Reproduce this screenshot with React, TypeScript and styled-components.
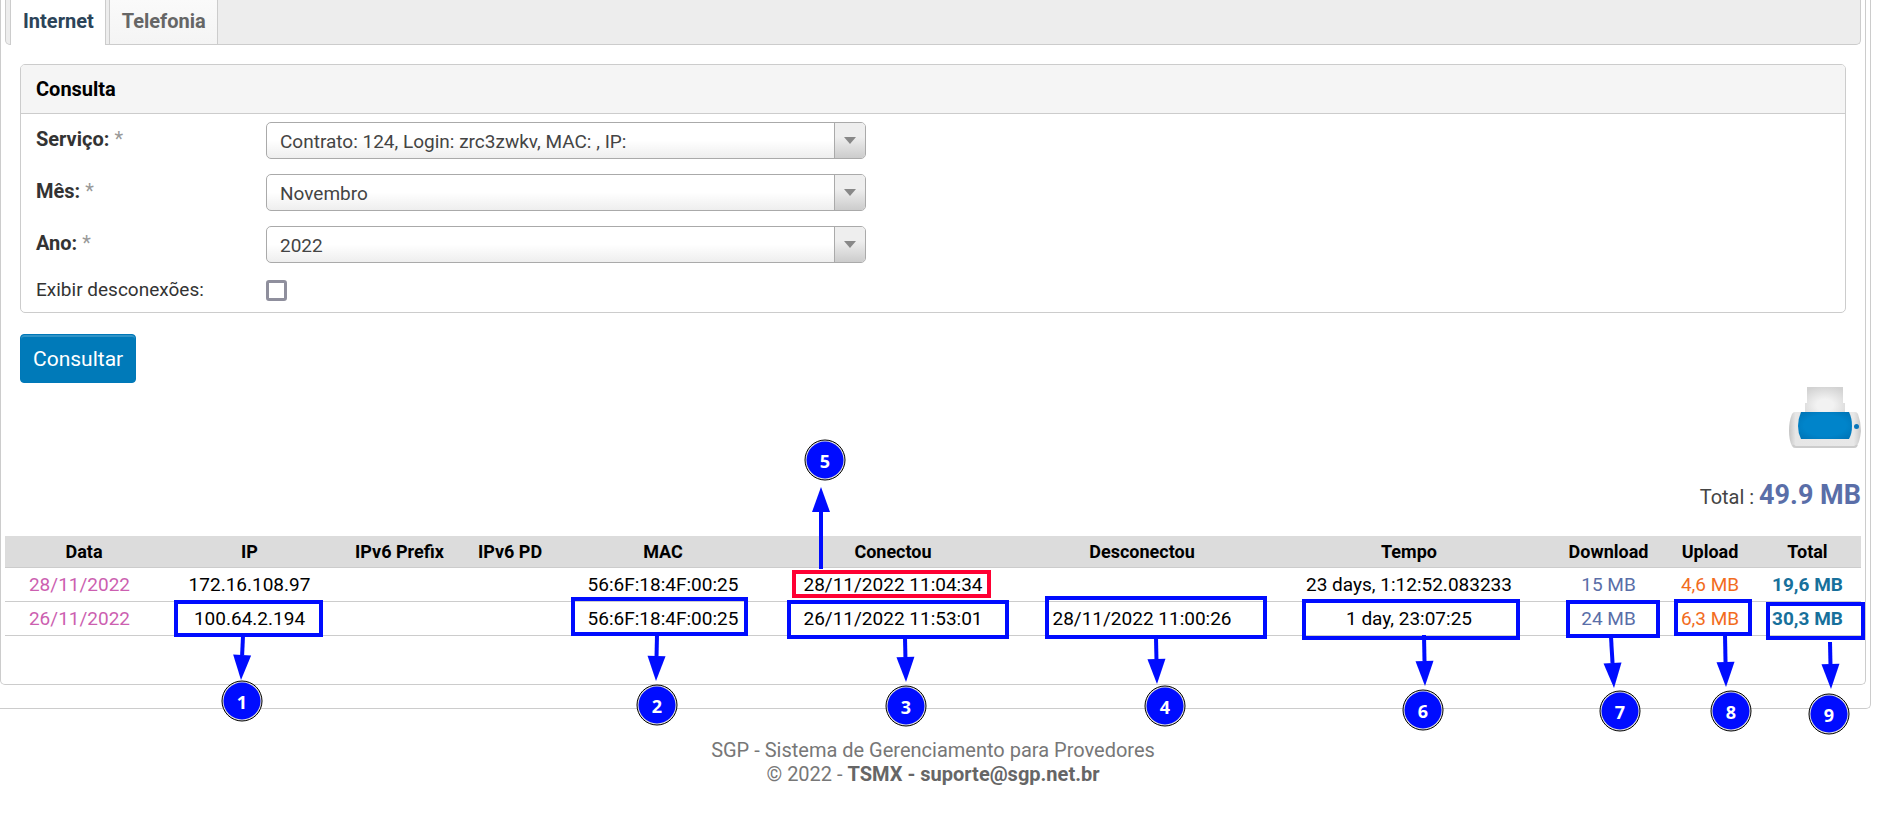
import React from 'react';
import styled, { createGlobalStyle } from 'styled-components';

const GlobalStyle = createGlobalStyle`
  *, *::before, *::after { box-sizing: border-box; }
  body {
    margin: 0;
    background: #fff;
    color: #333;
    font: 20px/24px Roboto, sans-serif;
  }
`;

const Page = styled.div`
  border: 1px solid #ccc;
  border-width: 0 1px 1px 0;
  border-bottom-right-radius: 5px;
  margin-right: 10px;
  padding: 0 4px 23px 0;
`;

const Panel = styled.main`
  border: 1px solid #ccc;
  border-top: 0;
  border-radius: 0 0 5px 5px;
  padding: 0 4px 48px;
`;

const TabBar = styled.nav`
  display: flex;
  gap: 3px;
  height: 45px;
  padding-left: 4px;
  background: #ededed;
  border: 1px solid #ccc;
  border-top: 0;
  border-radius: 0 0 5px 5px;
`;

const Tab = styled.a<{ $active?: boolean }>`
  height: ${p => (p.$active ? 45 : 44)}px;
  padding: 9px 11px 0 12px;
  border: 1px solid #ccc;
  border-width: 0 1px;
  background: ${p => (p.$active ? '#fff' : 'linear-gradient(#fafafa, #f4f4f4)')};
  color: ${p => (p.$active ? '#2c4459' : '#666')};
  font-weight: 700;
  text-decoration: none;
`;

const Form = styled.form`
  margin: 19px 15px 0;
`;

const Module = styled.section`
  border: 1px solid #ccc;
  border-radius: 5px;
  overflow: hidden;
`;

const ModuleTitle = styled.h2`
  margin: 0;
  padding: 12px 15px;
  background: #f5f5f5;
  border-bottom: 1px solid #ccc;
  color: #000;
  font-size: 20px;
  line-height: 24px;
`;

const Fields = styled.div`
  display: flex;
  flex-direction: column;
  gap: 15px;
  padding: 8px 15px 10px;
`;

const Row = styled.div`
  display: grid;
  grid-template-columns: 230px minmax(0, 600px);
  align-items: center;
`;

const Label = styled.label<{ $required?: boolean }>`
  font-weight: ${p => (p.$required ? 700 : 400)};
  font-size: ${p => (p.$required ? 20 : 19)}px;
  padding-bottom: ${p => (p.$required ? 4 : 0)}px;
`;

const Star = styled.span`
  color: #999;
  font-weight: 400;
`;

const SelectBox = styled.div`
  position: relative;
  height: 37px;
`;

const Select = styled.select`
  appearance: none;
  width: 100%;
  height: 37px;
  padding: 2px 44px 0 13px;
  border: 1px solid #aaa;
  border-radius: 5px;
  background: linear-gradient(#fff 50%, #eee);
  color: #444;
  font: 19px/24px Roboto, sans-serif;
`;

const Toggle = styled.span`
  position: absolute;
  top: 1px;
  right: 1px;
  bottom: 1px;
  width: 31px;
  display: grid;
  place-items: center;
  border-left: 1px solid #aaa;
  border-radius: 0 4px 4px 0;
  background: linear-gradient(#eee 40%, #ccc);
  pointer-events: none;

  &::before {
    content: '';
    border: 6px solid transparent;
    border-top: 7px solid #888;
    border-bottom: 0;
  }
`;

const Check = styled.input`
  appearance: none;
  width: 21px;
  height: 21px;
  margin: 0;
  border: 3px solid #8f8f9d;
  border-radius: 3px;
  background: #fff;
`;

const Submit = styled.button`
  height: 49px;
  margin-top: 21px;
  padding: 0 12px;
  border: 1px solid #0078b8;
  border-radius: 4px;
  background: #007ab9;
  box-shadow: inset 0 2px 0 #2f93c7;
  color: #fff;
  font: 21px/24px Roboto, sans-serif;
`;

const Summary = styled.div`
  display: flex;
  flex-direction: column;
  align-items: flex-end;
  gap: 29px;
  padding: 3px 0 23px;
`;

const PrintButton = styled.button`
  display: block;
  width: 72px;
  height: 64px;
  padding: 0;
  border: 0;
  background: none;
`;

const Total = styled.p`
  margin: 0;
  color: #444;
  line-height: 32px;
`;

const TotalValue = styled.strong`
  color: #5a6ea8;
  font-size: 27px;
`;

const Report = styled.div`
  position: relative;
`;

const Table = styled.table`
  width: 100%;
  table-layout: fixed;
  border-collapse: separate;
  border-spacing: 0;
  color: #000;
  text-align: center;
`;

const Th = styled.th`
  height: 32px;
  padding: 0;
  background: #dcdcdc;
  border-bottom: 1px solid #ccc;
  font-size: 18px;
`;

type Tone = 'date' | 'down' | 'up' | 'total';
const tones: Record<Tone, string> = {
  date: '#cc5fb0',
  down: '#5a6ea8',
  up: '#f26c1d',
  total: '#17709b',
};

const Td = styled.td<{ $tone?: Tone }>`
  height: 34px;
  padding: 1px ${p => (p.$tone === 'date' ? 9 : 0)}px 0 0;
  border-bottom: 1px solid #ccc;
  color: ${p => (p.$tone ? tones[p.$tone] : '#000')};
  font-size: 19px;
  font-weight: ${p => (p.$tone === 'total' ? 700 : 400)};
  white-space: nowrap;
`;

const Notes = styled.svg`
  position: absolute;
  top: 0;
  left: 0;
  overflow: visible;
  pointer-events: none;
`;

const NoteNumber = styled.text`
  fill: #fff;
  font: 700 18px 'Open Sans', 'Noto Sans', sans-serif;
  text-anchor: middle;
`;

const Footer = styled.footer`
  margin: 29px 15px 0 0;
  color: #777;
  text-align: center;
`;

const Contact = styled.strong`
  color: #666;
`;

const columns: [string, number][] = [
  ['Data', 158], ['IP', 173], ['IPv6 Prefix', 127], ['IPv6 PD', 94], ['MAC', 212],
  ['Conectou', 248], ['Desconectou', 250], ['Tempo', 284], ['Download', 115],
  ['Upload', 88], ['Total', 107],
];

const cellTones: (Tone | undefined)[] = [
  'date', undefined, undefined, undefined, undefined, undefined, undefined, undefined,
  'down', 'up', 'total',
];

const rows = [
  ['28/11/2022', '172.16.108.97', '', '', '56:6F:18:4F:00:25', '28/11/2022 11:04:34', '',
    '23 days, 1:12:52.083233', '15 MB', '4,6 MB', '19,6 MB'],
  ['26/11/2022', '100.64.2.194', '', '', '56:6F:18:4F:00:25', '26/11/2022 11:53:01',
    '28/11/2022 11:00:26', '1 day, 23:07:25', '24 MB', '6,3 MB', '30,3 MB'],
];

// Each note: framed area (left, top, right, bottom), arrow (from, to), badge centre.
type Note = { n: number; box: number[]; arrow: number[]; badge: number[]; color?: string };
const notes: Note[] = [
  { n: 1, box: [174, 600, 323, 637], arrow: [243, 636, 241, 680], badge: [242, 701] },
  { n: 2, box: [571, 597, 748, 636], arrow: [657, 635, 656, 681], badge: [657, 705] },
  { n: 3, box: [787, 600, 1009, 639], arrow: [905, 638, 906, 682], badge: [906, 706] },
  { n: 4, box: [1045, 596, 1267, 639], arrow: [1156, 638, 1157, 684], badge: [1165, 706] },
  { n: 5, box: [792, 570, 991, 598], arrow: [821, 569, 821, 487], badge: [825, 460], color: '#ff0033' },
  { n: 6, box: [1302, 599, 1520, 640], arrow: [1424, 635, 1425, 686], badge: [1423, 710] },
  { n: 7, box: [1566, 600, 1660, 638], arrow: [1611, 637, 1614, 688], badge: [1620, 711] },
  { n: 8, box: [1674, 599, 1752, 636], arrow: [1725, 635, 1726, 687], badge: [1731, 711] },
  { n: 9, box: [1766, 602, 1865, 640], arrow: [1830, 642, 1831, 689], badge: [1829, 714] },
];

const BLUE = '#000cff';

function NoteMark({ n, box, arrow, badge, color = BLUE }: Note) {
  const [l, t, r, b] = box;
  const [x1, y1, x2, y2] = arrow;
  const len = Math.hypot(x2 - x1, y2 - y1);
  const ux = (x2 - x1) / len;
  const uy = (y2 - y1) / len;
  const bx = x2 - ux * 25;
  const by = y2 - uy * 25;
  return (
    <g>
      <rect x={l + 2} y={t + 2} width={r - l - 4} height={b - t - 4} fill="none" stroke={color} strokeWidth="4" />
      <line x1={x1} y1={y1} x2={bx} y2={by} stroke={BLUE} strokeWidth="4" />
      <polygon
        points={`${x2},${y2} ${bx - uy * 9},${by + ux * 9} ${bx + uy * 9},${by - ux * 9}`}
        fill={BLUE}
      />
      <circle cx={badge[0]} cy={badge[1]} r="20" fill="#ddd" stroke="#000" strokeWidth="1" />
      <circle cx={badge[0]} cy={badge[1]} r="18.5" fill={BLUE} />
      <NoteNumber x={badge[0]} y={badge[1] + 8}>{n}</NoteNumber>
    </g>
  );
}

function Field({ id, label, value }: { id: string; label: string; value: string }) {
  return (
    <Row>
      <Label htmlFor={id} $required>{label} <Star>*</Star></Label>
      <SelectBox>
        <Select id={id} defaultValue={value}>
          <option>{value}</option>
        </Select>
        <Toggle />
      </SelectBox>
    </Row>
  );
}

function PrinterIcon() {
  return (
    <svg width="72" height="64" viewBox="0 0 72 64" aria-hidden="true">
      <defs>
        <radialGradient id="paper" cx="50%" cy="65%" r="70%">
          <stop offset="0.3" stopColor="#f2f2f2" />
          <stop offset="1" stopColor="#d2d2d2" />
        </radialGradient>
        <linearGradient id="body" x1="0" x2="1">
          <stop offset="0" stopColor="#c4c4c4" />
          <stop offset="0.09" stopColor="#e6e6e6" />
          <stop offset="0.9" stopColor="#e8e8e8" />
          <stop offset="1" stopColor="#c8c8c8" />
        </linearGradient>
        <radialGradient id="tray" cx="50%" cy="50%" r="65%">
          <stop offset="0.6" stopColor="#0084ca" />
          <stop offset="1" stopColor="#0074b6" />
        </radialGradient>
      </defs>
      <path d="M18 1h36v16h2v12H16V17h2z" fill="url(#paper)" />
      <path d="M6 26h60q2 0 3 2 3 8 3 17-1 10-4 15-1 2-3 2H6q-2 0-3-2-3-6-3-15 0-10 3-17 1-2 3-2z" fill="url(#body)" />
      <path d="M4 59q1 2 3 2h58q2 0 3-2" fill="none" stroke="#ccc" strokeWidth="2" />
      <path d="M12 26h48q3 6 3 14t-3 13H12q-3-6-3-13t3-14z" fill="url(#tray)" />
      <circle cx="67.500" cy="40.500" r="2.500" fill="#0b76ba" />
    </svg>
  );
}

export default function App() {
  return (
    <>
      <GlobalStyle />
      <Page>
        <Panel>
          <TabBar>
            <Tab href="#internet" $active>Internet</Tab>
            <Tab href="#telefonia">Telefonia</Tab>
          </TabBar>
          <Form onSubmit={e => e.preventDefault()}>
            <Module>
              <ModuleTitle>Consulta</ModuleTitle>
              <Fields>
                <Field id="servico" label="Serviço:" value="Contrato: 124, Login: zrc3zwkv, MAC: , IP:" />
                <Field id="mes" label="Mês:" value="Novembro" />
                <Field id="ano" label="Ano:" value="2022" />
                <Row>
                  <Label htmlFor="desconexoes">Exibir desconexões:</Label>
                  <Check id="desconexoes" type="checkbox" />
                </Row>
              </Fields>
            </Module>
            <Submit type="submit">Consultar</Submit>
          </Form>
          <Summary>
            <PrintButton type="button" aria-label="Imprimir"><PrinterIcon /></PrintButton>
            <Total>Total : <TotalValue>49.9 MB</TotalValue></Total>
          </Summary>
          <Report>
            <Table>
              <colgroup>
                {columns.map(([name, width]) => <col key={name} width={width} />)}
              </colgroup>
              <thead>
                <tr>{columns.map(([name]) => <Th key={name} scope="col">{name}</Th>)}</tr>
              </thead>
              <tbody>
                {rows.map(row => (
                  <tr key={row[0]}>
                    {row.map((cell, i) => <Td key={i} $tone={cellTones[i]}>{cell}</Td>)}
                  </tr>
                ))}
              </tbody>
            </Table>
            <Notes width="1856" height="100" viewBox="5 536 1856 100">
              {notes.map(note => <NoteMark key={note.n} {...note} />)}
            </Notes>
          </Report>
        </Panel>
      </Page>
      <Footer>
        SGP - Sistema de Gerenciamento para Provedores<br />
        © 2022 - <Contact>TSMX - suporte@sgp.net.br</Contact>
      </Footer>
    </>
  );
}
